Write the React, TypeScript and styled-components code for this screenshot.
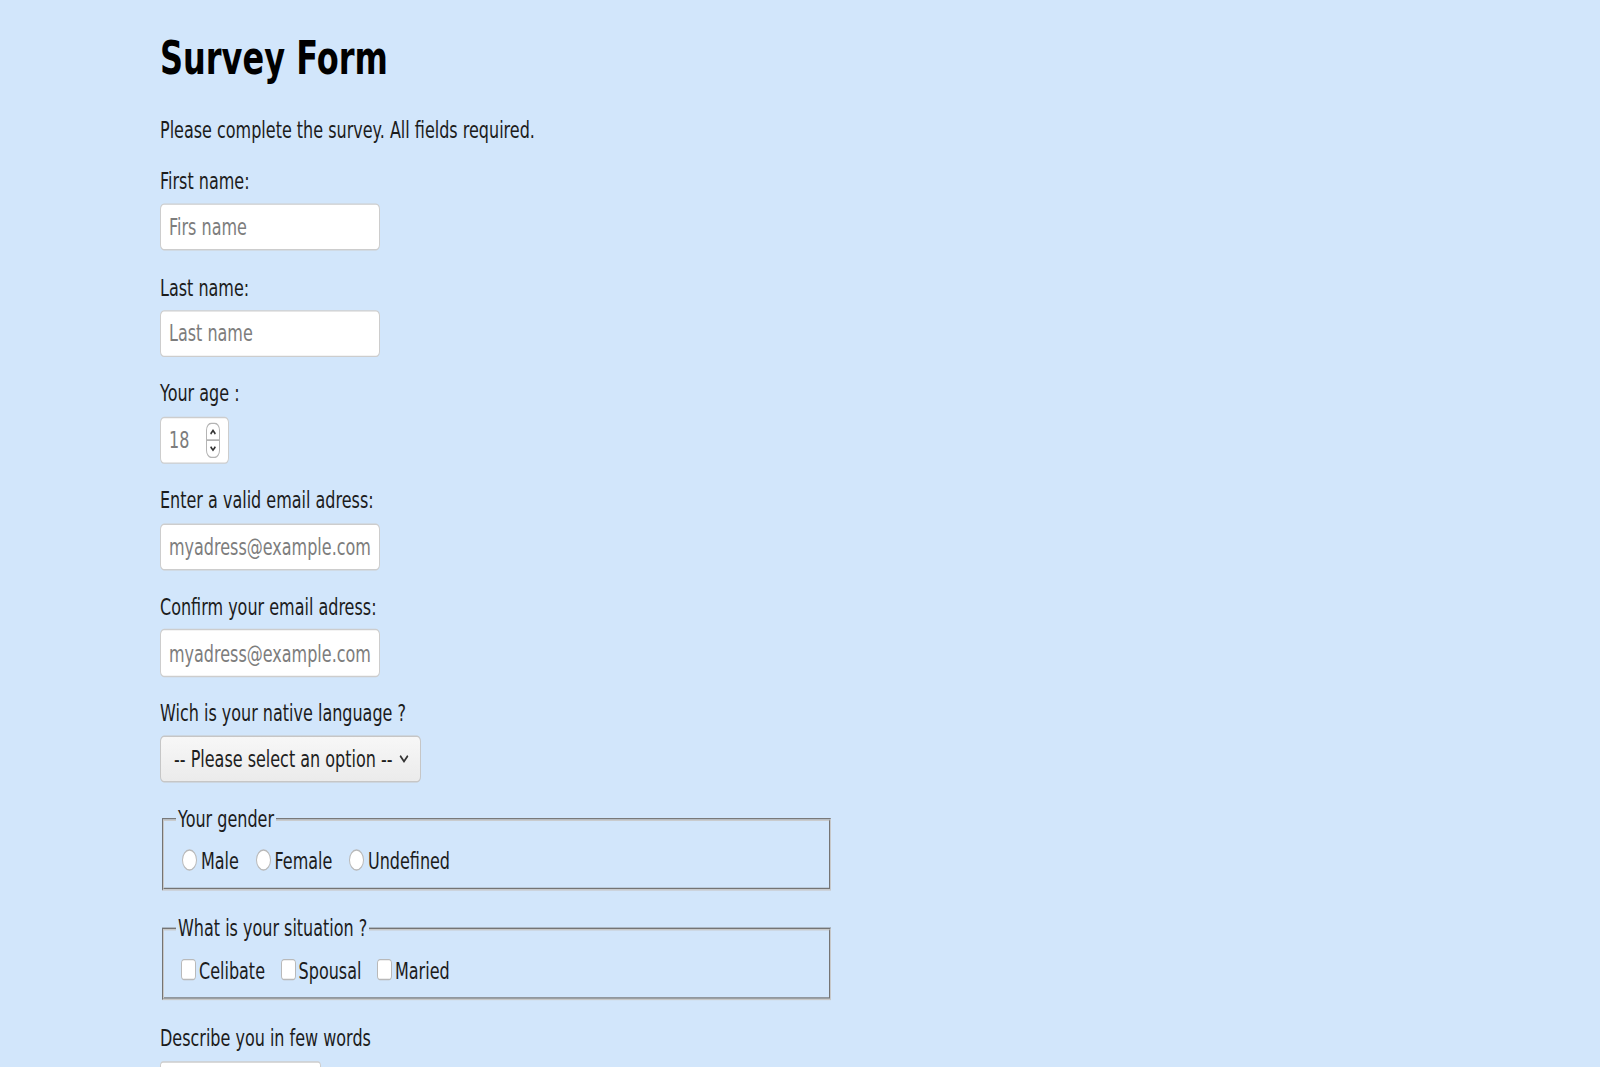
import React from "react";
import styled, { createGlobalStyle } from "styled-components";

const GlobalStyle = createGlobalStyle`
  html {
    background: #d2e6fb;
    scrollbar-width: none;
  }
  html::-webkit-scrollbar {
    display: none;
  }
  body {
    margin: 0;
    padding: 0;
    min-height: 1200px;
    background: #d2e6fb;
    font-family: "DejaVu Sans", "Liberation Sans", sans-serif;
    color: #1c1c1c;
  }
`;

/* The reference page is drawn with a tall vertical aspect; the whole sheet is stretched vertically. */
const Stage = styled.main`
  display: flow-root;
  padding: 0 160px;
  transform: scaleY(1.4227);
  transform-origin: 0 0;
`;

const Title = styled.h1`
  margin: 0;
  padding-top: 22.8px;
  font-size: 32px;
  line-height: 37.25px;
  font-weight: 700;
  color: #000;
`;

const Intro = styled.p`
  margin: 22.9px 0 0;
  font-size: 16px;
  line-height: 18.6px;
`;

const Form = styled.form`
  display: flex;
  flex-direction: column;
  align-items: flex-start;
  margin-top: 17.2px;
`;

const FieldLabel = styled.label<{ $top?: number }>`
  display: block;
  font-size: 16px;
  line-height: 18.6px;
  margin-top: ${(p) => p.$top ?? 0}px;
  margin-bottom: 5.6px;
`;

const TextInput = styled.input`
  box-sizing: border-box;
  width: 220px;
  height: 33.2px;
  margin: 0 0 17.5px;
  padding: 0 8px;
  border: 1px solid #cdcdcd;
  border-radius: 4px;
  background: #fff;
  font-family: "DejaVu Sans", sans-serif;
  font-size: 16px;
  color: #222;
  outline: none;
  &::placeholder {
    color: #7d7d7d;
  }
`;

const NumberBox = styled.div`
  box-sizing: border-box;
  display: flex;
  align-items: center;
  width: 69px;
  height: 33.2px;
  margin-bottom: 17.5px;
  padding: 0 8px 0 8px;
  border: 1px solid #cdcdcd;
  border-radius: 4px;
  background: #fff;
`;

const NumberInput = styled.input`
  flex: 1;
  min-width: 0;
  height: 100%;
  padding: 0;
  border: none;
  outline: none;
  background: transparent;
  font-family: "DejaVu Sans", sans-serif;
  font-size: 16px;
  color: #222;
  appearance: textfield;
  -moz-appearance: textfield;
  &::-webkit-inner-spin-button,
  &::-webkit-outer-spin-button {
    -webkit-appearance: none;
    margin: 0;
  }
  &::placeholder {
    color: #7d7d7d;
  }
`;

const Spinner = () => (
  <svg width="14" height="25" viewBox="0 0 14 25" aria-hidden="true">
    <path
      d="M0.5 12.5 V5.5 A5 5 0 0 1 5.5 0.5 H8.5 A5 5 0 0 1 13.5 5.5 V12.5 Z"
      fill="#fff"
      stroke="#b4b4b4"
    />
    <path
      d="M0.5 12.5 V19.5 A5 5 0 0 0 5.5 24.5 H8.5 A5 5 0 0 0 13.5 19.5 V12.5 Z"
      fill="#fff"
      stroke="#b4b4b4"
    />
    <path d="M4.6 8 L7 5.6 L9.4 8" fill="none" stroke="#333" strokeWidth="1.4" />
    <path d="M4.6 17 L7 19.4 L9.4 17" fill="none" stroke="#333" strokeWidth="1.4" />
  </svg>
);

const SelectWrap = styled.div`
  display: inline-grid;
  align-items: center;
  margin: -0.6px 0 17px;
  & > * {
    grid-area: 1 / 1;
  }
`;

const Select = styled.select`
  box-sizing: border-box;
  width: 261px;
  height: 33.4px;
  padding: 0 26px 0 13px;
  border: 1px solid #c6c6c6;
  border-radius: 4px;
  background: linear-gradient(#f7f7f7, #ebebeb);
  font-family: "DejaVu Sans", sans-serif;
  font-size: 16px;
  color: #1e1e1e;
  appearance: none;
  -webkit-appearance: none;
  outline: none;
`;

const Chevron = styled.svg`
  justify-self: end;
  margin-right: 12px;
  pointer-events: none;
`;

const Fieldset = styled.fieldset<{ $top?: number }>`
  box-sizing: border-box;
  width: 669px;
  margin: ${(p) => p.$top ?? 0}px 2px 0;
  padding: 0 12px 9.1px;
  border: 2px groove rgb(200, 200, 200);
  min-inline-size: 0;
`;

const Legend = styled.legend`
  padding: 0 2px;
  font-size: 16px;
  line-height: 18.6px;
`;

const OptionRow = styled.div`
  display: flex;
  align-items: flex-start;
  margin-top: 11px;
  height: 18.6px;
`;

const Option = styled.label<{ $gap: number }>`
  display: flex;
  align-items: flex-start;
  font-size: 16px;
  line-height: 18.6px;
  & + & {
    margin-left: ${(p) => p.$gap}px;
  }
`;

const Radio = styled.input.attrs({ type: "radio" })`
  appearance: none;
  -webkit-appearance: none;
  box-sizing: border-box;
  width: 15px;
  height: 15px;
  margin: 0 4px 0 6px;
  border: 1px solid #b9b9b9;
  border-radius: 50%;
  background: #fff;
`;

const Check = styled.input.attrs({ type: "checkbox" })`
  appearance: none;
  -webkit-appearance: none;
  box-sizing: border-box;
  width: 15px;
  height: 15px;
  margin: 0 3px 0 5px;
  border: 1px solid #b9b9b9;
  border-radius: 3px;
  background: #fff;
`;

const TextArea = styled.textarea`
  box-sizing: border-box;
  width: 161px;
  height: 48px;
  margin-top: 1.3px;
  border: 1px solid #cdcdcd;
  border-radius: 3px;
  background: #fff;
  resize: none;
`;

const textFields = [
  { id: "first", label: "First name:", placeholder: "Firs name", type: "text" },
  { id: "last", label: "Last name:", placeholder: "Last name", type: "text" },
];

const emailFields = [
  { id: "email", label: "Enter a valid email adress:", placeholder: "myadress@example.com" },
  { id: "email2", label: "Confirm your email adress:", placeholder: "myadress@example.com" },
];

export default function App() {
  return (
    <>
      <GlobalStyle />
      <Stage>
        <Title>Survey Form</Title>
        <Intro>Please complete the survey. All fields required.</Intro>
        <Form onSubmit={(e) => e.preventDefault()}>
          {textFields.map((f) => (
            <React.Fragment key={f.id}>
              <FieldLabel htmlFor={f.id}>{f.label}</FieldLabel>
              <TextInput id={f.id} type={f.type} placeholder={f.placeholder} />
            </React.Fragment>
          ))}

          <FieldLabel htmlFor="age">Your age :</FieldLabel>
          <NumberBox>
            <NumberInput id="age" type="number" placeholder="18" />
            <Spinner />
          </NumberBox>

          {emailFields.map((f) => (
            <React.Fragment key={f.id}>
              <FieldLabel htmlFor={f.id}>{f.label}</FieldLabel>
              <TextInput id={f.id} type="email" placeholder={f.placeholder} />
            </React.Fragment>
          ))}

          <FieldLabel htmlFor="lang">Wich is your native language ?</FieldLabel>
          <SelectWrap>
            <Select id="lang" defaultValue="">
              <option value="">-- Please select an option --</option>
              <option value="fr">French</option>
              <option value="en">English</option>
            </Select>
            <Chevron width="10" height="7" viewBox="0 0 10 7" aria-hidden="true">
              <path d="M1.2 1.2 L5 5.2 L8.8 1.2" fill="none" stroke="#333" strokeWidth="1.6" />
            </Chevron>
          </SelectWrap>

          <Fieldset>
            <Legend>Your gender</Legend>
            <OptionRow>
              {["Male", "Female", "Undefined"].map((g) => (
                <Option key={g} $gap={9}>
                  <Radio name="gender" value={g} />
                  {g}
                </Option>
              ))}
            </OptionRow>
          </Fieldset>

          <Fieldset $top={17.8}>
            <Legend>What is your situation ?</Legend>
            <OptionRow>
              {["Celibate", "Spousal", "Maried"].map((s) => (
                <Option key={s} $gap={10.6}>
                  <Check value={s} />
                  {s}
                </Option>
              ))}
            </OptionRow>
          </Fieldset>

          <FieldLabel htmlFor="about" $top={17.3}>
            Describe you in few words
          </FieldLabel>
          <TextArea id="about" />
        </Form>
      </Stage>
    </>
  );
}
